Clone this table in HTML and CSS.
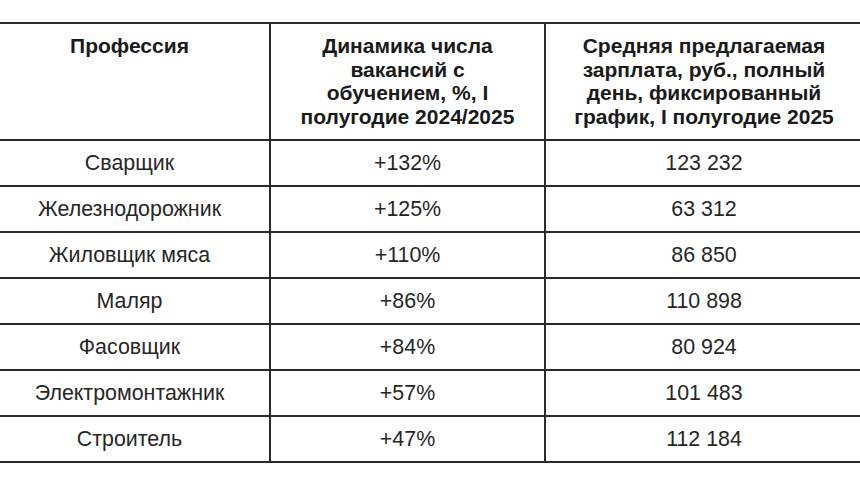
FILE: index.html
```html
<!DOCTYPE html>
<html lang="ru">
<head>
<meta charset="utf-8">
<link rel="stylesheet" href="styles.css">
</head>
<body>
<table class="data">
  <thead>
    <tr>
      <th class="c1">Профессия</th>
      <th class="c2">Динамика числа<br>вакансий с<br>обучением, %, I<br>полугодие 2024/2025</th>
      <th class="c3">Средняя предлагаемая<br>зарплата, руб., полный<br>день, фиксированный<br>график, I полугодие 2025</th>
    </tr>
  </thead>
  <tbody>
    <tr><td class="c1">Сварщик</td><td>+132%</td><td>123 232</td></tr>
    <tr><td class="c1">Железнодорожник</td><td>+125%</td><td>63 312</td></tr>
    <tr><td class="c1">Жиловщик мяса</td><td>+110%</td><td>86 850</td></tr>
    <tr><td class="c1">Маляр</td><td>+86%</td><td>110 898</td></tr>
    <tr><td class="c1">Фасовщик</td><td>+84%</td><td>80 924</td></tr>
    <tr><td class="c1">Электромонтажник</td><td>+57%</td><td>101 483</td></tr>
    <tr><td class="c1">Строитель</td><td>+47%</td><td>112 184</td></tr>
  </tbody>
</table>
</body>
</html>
```
FILE: styles.css
```css
html, body {
  margin: 0;
  padding: 0;
  background: #ffffff;
}
body {
  font-family: "Liberation Sans", Arial, sans-serif;
  color: #222222;
}
.data {
  margin-top: 22px;
  width: 862px;
  border-collapse: collapse;
  table-layout: fixed;
}
.data th, .data td {
  border-top: 2px solid #2a2a2a;
  border-bottom: 2px solid #2a2a2a;
  border-left: 2px solid #2a2a2a;
  text-align: center;
  padding: 0;
}
.data th:first-child, .data td:first-child {
  border-left: none;
}
.data th {
  font-weight: bold;
  font-size: 21px;
  line-height: 23.7px;
  color: #1a1a1a;
  vertical-align: top;
  height: 117px;
  padding-top: 10px;
  box-sizing: border-box;
}
.data td {
  font-size: 21.4px;
  height: 44px;
  line-height: 24px;
  vertical-align: middle;
  color: #262626;
}
.data .c1 {
  width: 270px;
  padding-right: 10px;
  box-sizing: border-box;
}
.data .c2 {
  width: 275px;
}
```
